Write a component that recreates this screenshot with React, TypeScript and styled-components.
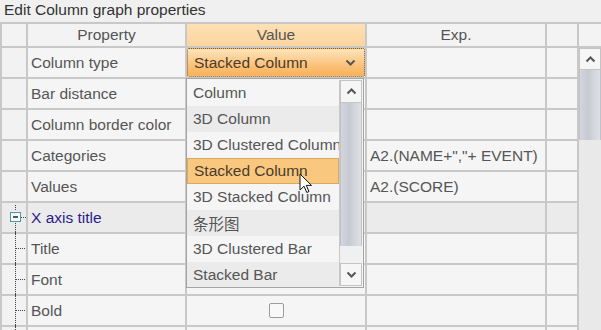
import React from 'react';
import styled, { createGlobalStyle } from 'styled-components';

const GlobalStyle = createGlobalStyle`
  html, body {
    margin: 0;
    padding: 0;
    background: #f0f0f0;
  }
`;

const Page = styled.div`
  position: relative;
  width: 601px;
  height: 330px;
  overflow: hidden;
  background: #f0f0f0;
  font-family: 'Liberation Sans', Arial, 'Noto Sans CJK SC', sans-serif;
  font-size: 15.5px;
  color: #555;
`;

const TitleBar = styled.div`
  height: 22px;
  padding-left: 4px;
  line-height: 20px;
  color: #333;
`;

const Grid = styled.div`
  display: grid;
  grid-template-columns: 24px 157px 178px 178px 30px 22px;
  grid-template-rows: 22px;
  grid-auto-rows: 29px;
  gap: 2px;
  padding: 2px 0 0 2px;
  background: #c8c8c8;
`;

const HeaderCell = styled.div<{ $active?: boolean }>`
  display: flex;
  align-items: center;
  justify-content: center;
  background: ${(p) => (p.$active ? 'linear-gradient(#fde0b4, #fcd59e)' : '#f3f3f3')};
  color: #555;
`;

const Cell = styled.div<{ $shade?: boolean; $center?: boolean }>`
  display: flex;
  align-items: center;
  justify-content: ${(p) => (p.$center ? 'center' : 'flex-start')};
  padding-left: ${(p) => (p.$center ? 0 : 3)}px;
  background: ${(p) => (p.$shade ? '#ebebeb' : '#f5f5f5')};
  white-space: nowrap;
  overflow: hidden;
`;

const Label = styled.span<{ $group?: boolean }>`
  color: ${(p) => (p.$group ? '#2a1d8e' : '#555')};
`;

const TreeCell = styled.div<{ $shade?: boolean }>`
  background: ${(p) => (p.$shade ? '#ebebeb' : '#f2f2f2')};
  overflow: visible;
  position: relative;
`;

const TreeSvg = styled.svg`
  position: absolute;
  left: 0;
  top: -2px;
  overflow: visible;
`;

const Combo = styled.div`
  flex: 1;
  align-self: stretch;
  display: flex;
  align-items: center;
  justify-content: space-between;
  margin-left: -3px;
  padding: 0 8px 0 6px;
  border: 1px dotted #7a5a30;
  border-radius: 2px;
  background: linear-gradient(#fde4bc, #fbc27a 60%, #f8b25a);
  color: #4a3c2c;
`;

const Checkbox = styled.div`
  width: 13px;
  height: 13px;
  border: 1px solid #9c9c9c;
  border-radius: 2px;
  background: #f8f8f8;
`;

const VScroll = styled.div`
  grid-column: 6;
  grid-row: 2 / span 10;
  display: flex;
  flex-direction: column;
  background: #e9e9e9;
`;

const ScrollButton = styled.div<{ $h: number }>`
  height: ${(p) => p.$h}px;
  flex: none;
  display: flex;
  align-items: center;
  justify-content: center;
  background: #f6f6f6;
  border: 1px solid #c4c4c4;
  box-sizing: border-box;
`;

const Thumb = styled.div<{ $h: number }>`
  height: ${(p) => p.$h}px;
  flex: none;
  background: linear-gradient(90deg, #d3d6dc, #c6cad2 40%, #cfd2d8 60%, #dde0e4);
  border-left: 1px solid #bfc2c8;
  border-right: 1px solid #bfc2c8;
`;

const Popup = styled.div`
  position: absolute;
  left: 186px;
  top: 78px;
  width: 178px;
  height: 210px;
  box-sizing: border-box;
  border: 1px solid #a4a4a4;
  display: flex;
  background: #f4f4f4;
`;

const List = styled.div`
  flex: 1;
  overflow: hidden;
  display: flex;
  flex-direction: column;
  padding-top: 1px;
`;

const Item = styled.div<{ $odd: boolean; $selected?: boolean }>`
  height: 26px;
  flex: none;
  display: flex;
  align-items: center;
  padding-left: 6px;
  white-space: nowrap;
  box-sizing: border-box;
  color: ${(p) => (p.$selected ? '#4a3c2c' : '#555')};
  background: ${(p) => (p.$selected ? '#f9c77e' : p.$odd ? '#ebebeb' : '#f5f5f5')};
  border: ${(p) => (p.$selected ? '1px solid #d8a85e' : '0')};
`;

const PopupScroll = styled.div`
  width: 22px;
  margin: 1px 1px 1px 0;
  display: flex;
  flex-direction: column;
  background: #ececec;
  border-left: 1px solid #c8c8c8;
`;

const Track = styled.div`
  flex: 1;
  background: #f0f0f0;
`;

const Cursor = styled.svg`
  position: absolute;
  left: 299px;
  top: 173px;
`;

const Chevron = ({ up }: { up?: boolean }) => (
  <svg width="11" height="7" viewBox="0 0 11 7">
    <polyline
      points={up ? '1.5,5.5 5.5,1.5 9.5,5.5' : '1.5,1.5 5.5,5.5 9.5,1.5'}
      fill="none"
      stroke="#555"
      strokeWidth="2"
    />
  </svg>
);

const Tree = ({ kind }: { kind: 'node' | 'leaf' }) => (
  <TreeSvg width="24" height="31">
    {kind === 'node' ? (
      <>
        <line x1="13.5" y1="4" x2="13.5" y2="10" stroke="#444" strokeDasharray="1 1" />
        <line x1="13.5" y1="22" x2="13.5" y2="33" stroke="#444" strokeDasharray="1 1" />
        <rect x="8.5" y="11.5" width="10" height="9" fill="#f4f8fa" stroke="#4a98a8" />
        <line x1="11" y1="16" x2="16" y2="16" stroke="#222" strokeWidth="1.5" />
        <line x1="19" y1="16.5" x2="24" y2="16.5" stroke="#444" strokeDasharray="1 1" />
      </>
    ) : (
      <>
        <line x1="13.5" y1="0" x2="13.5" y2="33" stroke="#444" strokeDasharray="1 1" />
        <line x1="14" y1="16.5" x2="24" y2="16.5" stroke="#444" strokeDasharray="1 1" />
      </>
    )}
  </TreeSvg>
);

type Row = {
  label: string;
  tree?: 'node' | 'leaf';
  group?: boolean;
  value?: React.ReactNode;
  exp?: string;
};

const rows: Row[] = [
  {
    label: 'Column type',
    value: (
      <Combo>
        <span>Stacked Column</span>
        <Chevron />
      </Combo>
    ),
  },
  { label: 'Bar distance' },
  { label: 'Column border color' },
  { label: 'Categories', exp: 'A2.(NAME+","+ EVENT)' },
  { label: 'Values', exp: 'A2.(SCORE)' },
  { label: 'X axis title', tree: 'node', group: true },
  { label: 'Title', tree: 'leaf' },
  { label: 'Font', tree: 'leaf' },
  { label: 'Bold', tree: 'leaf', value: <Checkbox /> },
  { label: '', tree: 'leaf' },
];

const options = [
  'Column',
  '3D Column',
  '3D Clustered Column',
  'Stacked Column',
  '3D Stacked Column',
  '条形图',
  '3D Clustered Bar',
  'Stacked Bar',
];

const App: React.FC = () => {
  return (
    <Page>
      <GlobalStyle />
      <TitleBar>Edit Column graph properties</TitleBar>
      <Grid>
        <HeaderCell />
        <HeaderCell>Property</HeaderCell>
        <HeaderCell $active>Value</HeaderCell>
        <HeaderCell>Exp.</HeaderCell>
        <HeaderCell />
        <HeaderCell />
        {rows.map((row, i) => (
          <React.Fragment key={`row-${i}`}>
            <TreeCell $shade={row.group}>{row.tree && <Tree kind={row.tree} />}</TreeCell>
            <Cell $shade={row.group}>
              <Label $group={row.group}>{row.label}</Label>
            </Cell>
            <Cell $shade={row.group} $center={!!row.value && i > 0}>
              {row.value}
            </Cell>
            <Cell $shade={row.group}>{row.exp}</Cell>
            <Cell $shade={row.group} />
          </React.Fragment>
        ))}
        <VScroll>
          <ScrollButton $h={22}>
            <Chevron up />
          </ScrollButton>
          <Thumb $h={70} />
        </VScroll>
      </Grid>
      <Popup>
        <List>
          {options.map((opt, i) => (
            <Item key={opt} $odd={i % 2 === 1} $selected={opt === 'Stacked Column'}>
              {opt}
            </Item>
          ))}
        </List>
        <PopupScroll>
          <ScrollButton $h={23}>
            <Chevron up />
          </ScrollButton>
          <Thumb $h={143} />
          <Track />
          <ScrollButton $h={23}>
            <Chevron />
          </ScrollButton>
        </PopupScroll>
      </Popup>
      <Cursor width="14" height="22" viewBox="0 0 14 22">
        <path
          d="M1,1 L1,17 L5,13.2 L7.8,19.5 L10,18.5 L7.3,12.4 L12.5,12.4 Z"
          fill="#fff"
          stroke="#111"
          strokeWidth="1"
          strokeLinejoin="round"
        />
      </Cursor>
    </Page>
  );
};

export default App;
